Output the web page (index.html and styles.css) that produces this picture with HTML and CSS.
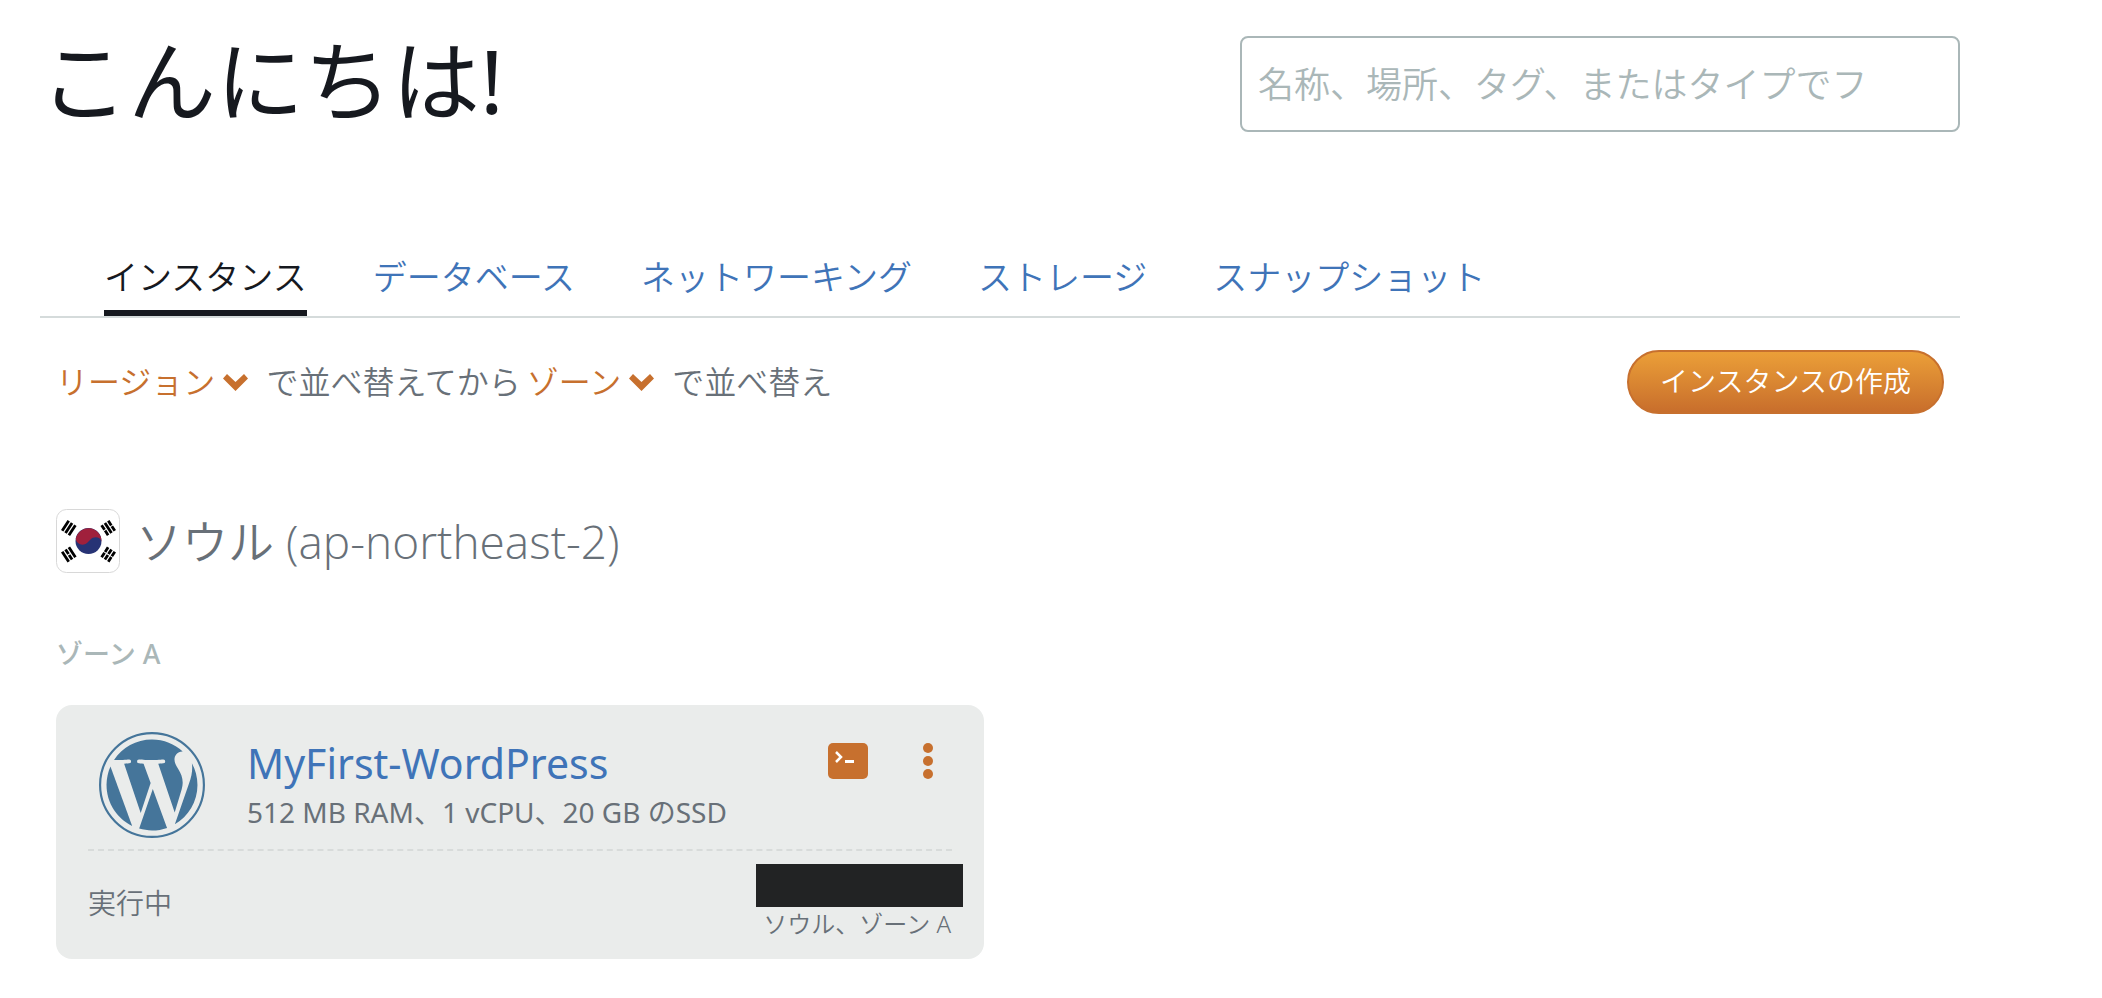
FILE: index.html
```
<!DOCTYPE html>
<html lang="ja">
<head>
    <meta charset="UTF-8">
    <meta name="viewport" content="width=device-width, initial-scale=1">
    <title>Lightsail</title>
    <link rel="stylesheet" href="styles.css">
</head>
<body>

    <header class="page-header">
        <h1 class="greeting">こんにちは!</h1>
        <input class="search" type="search" aria-label="検索" placeholder="名称、場所、タグ、またはタイプでフ">
    </header>

    <nav class="tabs">
        <a class="tab active" href="#instances">インスタンス</a>
        <a class="tab" href="#databases">データベース</a>
        <a class="tab" href="#networking">ネットワーキング</a>
        <a class="tab" href="#storage">ストレージ</a>
        <a class="tab" href="#snapshots">スナップショット</a>
    </nav>

    <main class="content" id="instances">
        <div class="toolbar">
            <div class="sort">
                <button class="sort-button" type="button">リージョン
                    <svg class="chevron" viewBox="0 0 25 17" aria-hidden="true"><path d="M4 0l8.500 8L21 0l4 4.500L12.500 17 0 4.500z"/></svg>
                </button>
                <span class="sort-text">で並べ替えてから</span>
                <button class="sort-button" type="button">ゾーン
                    <svg class="chevron" viewBox="0 0 25 17" aria-hidden="true"><path d="M4 0l8.500 8L21 0l4 4.500L12.500 17 0 4.500z"/></svg>
                </button>
                <span class="sort-text">で並べ替え</span>
            </div>
            <button class="create-button" type="button">インスタンスの作成</button>
        </div>

        <h2 class="region">
            <svg class="flag" viewBox="0 0 64 64" aria-hidden="true">
                <rect x="0.500" y="0.500" width="63" height="63" rx="10" fill="#fff" stroke="#d8d8d8"/>
                <circle cx="32.500" cy="32" r="13" fill="#273375"/>
                <path d="M19.800 29.500A13 13 0 0 1 45.500 32.500C44.500 27.500 37.500 27 34.500 30.500L31 34C27 37.500 20.500 35.500 19.800 29.500z" fill="#a0203c"/>
                <g stroke="#000" stroke-width="2.800">
                    <path transform="translate(12.800 19) rotate(33)" d="M-4-6V6M0-6V6M4-6V6"/>
                    <path transform="translate(52.200 19) rotate(-33)" d="M-4-6v5.500M-4 .5V6M0-6V6M4-6v5.500M4 .5V6"/>
                    <path transform="translate(12.800 45.500) rotate(-33)" d="M-4-6V6M0-6v5.500M0 .5V6M4-6V6"/>
                    <path transform="translate(52.200 45.500) rotate(33)" d="M-4-6v5.500M-4 .5V6M0-6v5.500M0 .5V6M4-6v5.500M4 .5V6"/>
                </g>
            </svg>
            <span>ソウル (ap-northeast-2)</span>
        </h2>

        <h3 class="zone">ゾーン A</h3>

        <div class="cards">
            <article class="card">
                <div class="card-top">
                    <svg class="logo" viewBox="0 0 122.520 122.520" role="img" aria-label="WordPress">
                        <circle cx="61.260" cy="61.260" r="60" fill="none" stroke-width="2.500"/>
                        <path d="M8.708 61.260c0 20.802 12.089 38.779 29.619 47.298L13.258 39.872C10.342 46.408 8.708 53.641 8.708 61.260z"/>
                        <path d="M96.740 58.608c0-6.495-2.333-10.993-4.334-14.494-2.664-4.329-5.161-7.995-5.161-12.324 0-4.831 3.664-9.328 8.825-9.328.233 0 .454.029.681.042-9.350-8.566-21.807-13.796-35.489-13.796-18.360 0-34.513 9.420-43.910 23.688 1.233.037 2.395.063 3.382.063 5.497 0 14.006-.667 14.006-.667 2.833-.167 3.167 3.994.337 4.329 0 0-2.847.335-6.015.501L48.200 93.547l11.501-34.493-8.188-22.434c-2.830-.166-5.511-.501-5.511-.501-2.832-.166-2.500-4.496.332-4.329 0 0 8.679.667 13.843.667 5.496 0 14.006-.667 14.006-.667 2.835-.167 3.168 3.994.337 4.329 0 0-2.853.335-6.015.501l18.992 56.494 5.242-17.517C95.011 68.328 96.740 63.109 96.740 58.608z"/>
                        <path d="M62.184 65.857l-15.768 45.819c4.708 1.384 9.687 2.141 14.846 2.141 6.120 0 11.989-1.058 17.452-2.979-.141-.225-.269-.464-.374-.724L62.184 65.857z"/>
                        <path d="M107.376 36.046c.226 1.674.354 3.471.354 5.404 0 5.333-.996 11.328-3.996 18.824l-16.053 46.413c15.624-9.111 26.133-26.038 26.133-45.426C113.815 52.124 111.481 43.532 107.376 36.046z"/>
                    </svg>
                    <div class="info">
                        <a class="name" href="#wordpress">MyFirst-WordPress</a>
                        <p class="specs">512 MB RAM、1 vCPU、20 GB のSSD</p>
                    </div>
                    <div class="actions">
                        <button class="icon-button" type="button" aria-label="接続">
                            <svg width="40" height="36" viewBox="0 0 40 36"><rect width="40" height="36" rx="5" fill="#c7702e"/><path d="M8 9l5 5-5 5" fill="none" stroke="#fff" stroke-width="2.500"/><path d="M17 18.500h9" stroke="#fff" stroke-width="3"/></svg>
                        </button>
                        <button class="icon-button" type="button" aria-label="メニュー">
                            <svg width="10" height="36" viewBox="0 0 10 36" fill="#c7702e"><circle cx="5" cy="5" r="5"/><circle cx="5" cy="18" r="5"/><circle cx="5" cy="31" r="5"/></svg>
                        </button>
                    </div>
                </div>
                <div class="card-bottom">
                    <span class="status">実行中</span>
                    <div class="location">
                        <div class="address"></div>
                        <span class="place">ソウル、ゾーン A</span>
                    </div>
                </div>
            </article>
        </div>
    </main>

</body>
</html>
```
FILE: styles.css
```
* {
    box-sizing: border-box;
}

body {
    margin: 0;
    padding: 36px 142px 36px 40px;
    background: #fff;
    color: #16191f;
    font-family: "Noto Sans", "Noto Sans CJK JP", sans-serif;
    font-weight: 350;
}

h1, h2, h3, p {
    margin: 0;
    font-weight: 400;
}

button {
    padding: 0;
    border: 0;
    background: none;
    font-family: inherit;
    font-weight: inherit;
    cursor: pointer;
}

a {
    color: #3f74b8;
    text-decoration: none;
}

svg {
    display: block;
}

/* Header */
.page-header {
    display: flex;
    justify-content: space-between;
    align-items: flex-start;
    height: 208px;
}

.greeting {
    font-size: 88px;
    line-height: 88px;
}

.search {
    width: 720px;
    height: 96px;
    padding: 0 16px;
    border: 2px solid #aab7b8;
    border-radius: 8px;
    font-family: inherit;
    font-size: 36px;
    font-weight: inherit;
}

.search::placeholder {
    color: #aab7b8;
}

/* Tabs */
.tabs {
    display: flex;
    gap: 66px;
    padding-left: 64px;
    border-bottom: 2px solid #d5dbdb;
}

.tab {
    border-bottom: 6px solid transparent;
    font-size: 34px;
    line-height: 66px;
    white-space: nowrap;
}

.tab.active {
    border-color: #16191f;
    color: #16191f;
}

.content {
    padding: 32px 16px 0;
}

/* Sorting and create button */
.toolbar {
    display: flex;
    justify-content: space-between;
    align-items: center;
}

.sort {
    display: flex;
    align-items: center;
    color: #687078;
    font-size: 32px;
    line-height: 48px;
}

.sort-button {
    display: flex;
    align-items: center;
    gap: 8px;
    color: #c7702e;
    font-size: 32px;
    line-height: 48px;
}

.chevron {
    width: 25px;
    height: 17px;
    fill: #c7702e;
}

.sort-text {
    padding: 0 6px 0 18px;
}

.create-button {
    height: 64px;
    padding: 0 31px 4px;
    border: 2px solid #c7702e;
    border-radius: 32px;
    background: linear-gradient(#eb9f38, #c86e2c);
    color: #fff;
    font-size: 28px;
}

/* Region */
.region {
    display: flex;
    align-items: center;
    gap: 16px;
    margin-top: 95px;
    color: #687078;
    font-size: 46px;
    font-weight: 350;
    line-height: 64px;
    font-family: "Open Sans", "Noto Sans CJK JP", sans-serif;
}

.flag {
    width: 64px;
    height: 64px;
}

.zone {
    margin: 61px 0 31px;
    color: #aab7b8;
    font-size: 27px;
    font-weight: 500;
    line-height: 40px;
}

/* Instance cards */
.cards {
    display: grid;
    grid-template-columns: 1fr 1fr;
    gap: 32px;
}

.card {
    padding-bottom: 18px;
    border-radius: 16px;
    background: #eaeceb;
}

.card-top {
    display: flex;
    margin: 0 32px;
    padding: 27px 0 11px 11px;
    border-bottom: 2px dashed #d8dbda;
}

.logo {
    width: 106px;
    height: 106px;
    fill: #45759a;
    stroke: none;
}

.logo circle {
    stroke: #45759a;
}

.info {
    flex: 1;
    padding: 3px 0 0 42px;
}

.name {
    display: block;
    font-size: 41px;
    font-weight: 400;
    line-height: 56px;
}

.specs {
    color: #687078;
    font-size: 28px;
    line-height: 42px;
}

.actions {
    display: flex;
    align-items: flex-start;
    gap: 55px;
    padding: 11px 19px 0 0;
}

.card-bottom {
    display: flex;
    justify-content: space-between;
    align-items: center;
    padding: 13px 21px 0 32px;
    color: #687078;
}

.status {
    font-size: 28px;
    line-height: 40px;
}

.address {
    width: 207px;
    height: 43px;
    background: #222324;
}

.place {
    display: block;
    padding-right: 12px;
    font-size: 24px;
    line-height: 34px;
    text-align: right;
}
```
